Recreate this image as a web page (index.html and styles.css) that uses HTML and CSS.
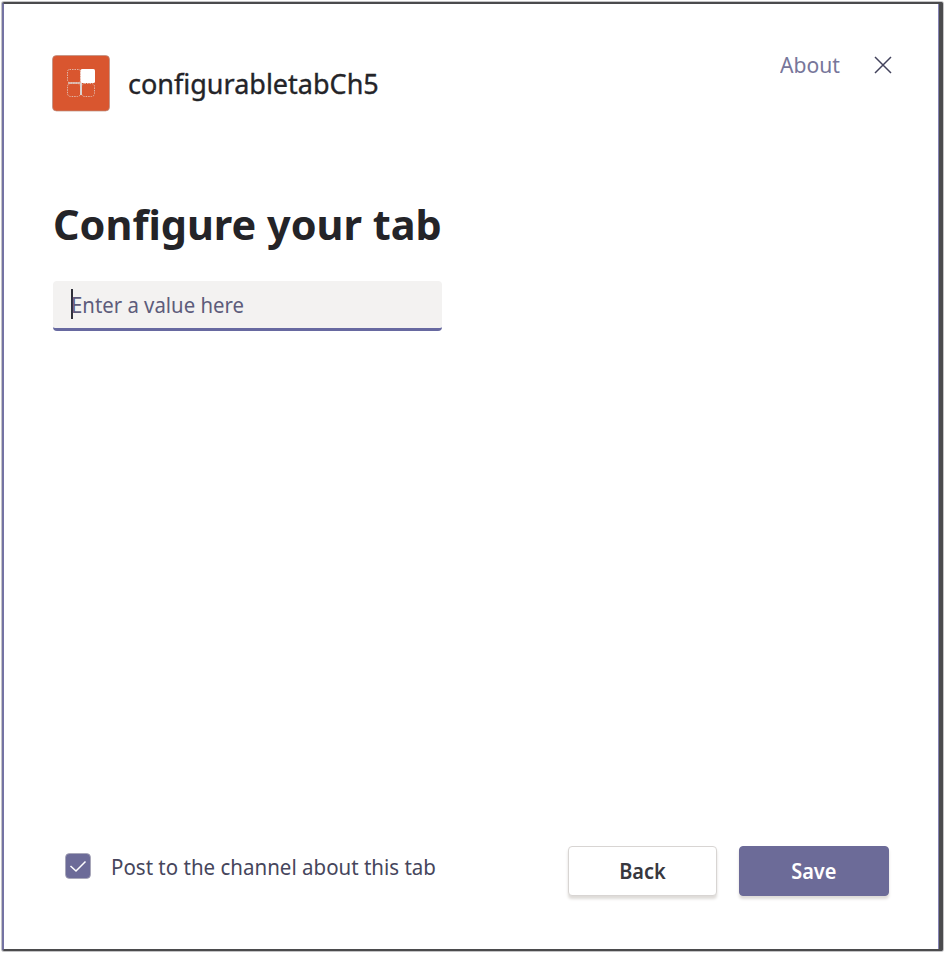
FILE: index.html
```html
<!DOCTYPE html>
<html lang="en">
<head>
<meta charset="utf-8">
<title>configurabletabCh5</title>
<link rel="stylesheet" href="styles.css">
</head>
<body>
<main class="dialog">
  <header class="header">
    <svg class="app-icon" width="58" height="57" viewBox="0 0 58 57">
      <rect x=".5" y=".5" width="57" height="55.500" rx="4" fill="#d9562f" stroke="#b98f82" stroke-width=".7"/>
      <g fill="none" stroke="#e0b5a6" stroke-width="1" stroke-dasharray="1.5 1">
        <rect x="15.500" y="14.500" width="13" height="13" rx="2"/>
        <rect x="15.500" y="28.500" width="13" height="13" rx="3"/>
        <rect x="29.500" y="28.500" width="13" height="13" rx="3"/>
      </g>
      <path d="M16 28H29" stroke="#dcc5bd" stroke-width="1.500"/>
      <path d="M29 28V40" stroke="#dcd3d0" stroke-width="2"/>
      <rect x="28.500" y="14" width="14.500" height="14" rx="1.500" fill="#fff"/>
    </svg>
    <span class="app-name">configurabletabCh5</span>
    <a class="about"><span class="fit-about">About</span></a>
    <svg class="close" width="18" height="18" viewBox="0 0 18 18"><path d="M1 1L17 17M17 1L1 17" stroke="#42425c" stroke-width="1.500" fill="none"/></svg>
  </header>
  <h1 class="heading"><span class="fit-heading">Configure your tab</span></h1>
  <div class="field"><i class="caret"></i><span class="fit-field">Enter a value here</span></div>
  <footer class="footer">
    <svg class="check" width="26" height="26" viewBox="0 0 26 26"><rect x=".5" y=".5" width="25" height="25" rx="4" fill="#6c6b98" stroke="#a5a3b4" stroke-width=".8"/><path d="M5.500 13L11 18L20.500 8.500" fill="none" stroke="#fff" stroke-width="1.500"/></svg>
    <span class="label"><span class="fit-label">Post to the channel about this tab</span></span>
    <button class="btn"><span class="fit-btn">Back</span></button>
    <button class="btn primary"><span class="fit-btn">Save</span></button>
  </footer>
</main>
</body>
</html>
```
FILE: styles.css
```css
* { box-sizing: border-box; }
body {
  margin: 0;
  padding: 2px;
  background: #fff;
  font-family: "Noto Sans", "Open Sans", sans-serif;
  color: #242428;
}
.dialog {
  display: flex;
  flex-direction: column;
  width: 941px;
  height: 949px;
  padding: 51px 50px 0 49px;
  border-style: solid;
  border-width: 2px 4px 2px 2px;
  border-color: #4b4b4d #4b4b4d #4b4b4d #7473a3;
  border-radius: 2px;
  box-shadow: inset -1px 0 #8584b4, 0 0 0 1px #c4c4c6;
}
.header { display: flex; align-items: flex-start; height: 57px; }
.app-icon { flex: none; margin-left: -1px; }
.app-name { margin: 10px 0 0 18px; width: 252px; font-size: 27px; line-height: 38px; -webkit-text-stroke: .35px currentColor; white-space: nowrap; }
.about { margin: -6px 0 0 auto; width: 60px; font-size: 22px; line-height: 30px; color: #77769a; white-space: nowrap; }
.close { margin: 1px -3px 0 34px; }
.heading { margin: 82px 0 0; font-size: 42px; line-height: 60px; font-weight: 700; white-space: nowrap; }
.field {
  display: flex;
  align-items: center;
  width: 389px;
  height: 50px;
  margin-top: 27px;
  padding: 0 0 1px 18px;
  background: #f3f2f1;
  border-bottom: 3px solid #6769a0;
  border-radius: 4px;
  font-size: 22px;
  color: #5d5c7b;
  white-space: nowrap;
}
.caret { width: 2px; height: 30px; margin-right: -2px; background: #303039; }
.footer { display: flex; align-items: flex-start; margin-top: 515px; }
.check { margin: 7px 0 0 12px; }
.label { margin: 5px auto 0 20px; width: 326px; font-size: 22px; line-height: 30px; color: #46465c; white-space: nowrap; }
.fit-about, .fit-heading, .fit-field, .fit-label, .fit-btn { display: inline-block; transform-origin: left; }
.fit-about { transform: scaleX(.96); }
.fit-heading { transform: scaleX(.986); }
.fit-field { transform: scaleX(.925); }
.fit-label { transform: scaleX(.932); }
.fit-btn { transform: scaleX(.95); transform-origin: center; }
.btn {
  width: 149px;
  height: 50px;
  margin: 0 0 0 22px;
  padding: 0;
  border: 1px solid #d8d5d3;
  border-radius: 4px;
  background: #fff;
  box-shadow: 0 3px 3px #dedbd8;
  font: 600 21px/48px "Noto Sans", "Open Sans", sans-serif;
  color: #38383e;
}
.primary { width: 150px; background: #6c6b98; border-color: #6c6b98; color: #fff; }
```
